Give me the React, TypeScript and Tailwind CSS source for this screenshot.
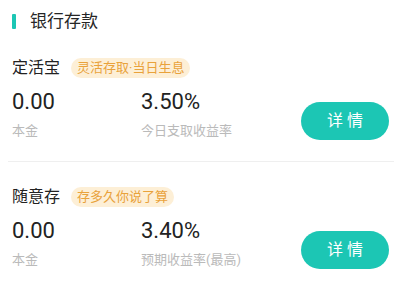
import React from 'react';

const FONT = { fontFamily: 'Roboto, "Noto Sans CJK SC", sans-serif' };

interface Product {
  name: string;
  tag: string;
  amount: string;
  rate: string;
  rateLabel: string;
}

const PRODUCTS: Product[] = [
  { name: '定活宝', tag: '灵活存取·当日生息', amount: '0.00', rate: '3.50%', rateLabel: '今日支取收益率' },
  { name: '随意存', tag: '存多久你说了算', amount: '0.00', rate: '3.40%', rateLabel: '预期收益率(最高)' },
];

function ProductRow({ p }: { p: Product }) {
  return (
    <div className="flex flex-col">
      <div className="flex items-center h-[22px] gap-[11px]">
        <span className="text-[16px] leading-[22px] text-[#222]">{p.name}</span>
        <span className="h-[20px] px-[6px] rounded-full bg-[#fdefd6] text-[#e9a23b] text-[13px] leading-[20px]">
          {p.tag}
        </span>
      </div>
      <div className="flex items-end mt-[10px]">
        <div className="w-[129px] flex flex-col">
          <span className="text-[22px] leading-[26px] text-[#222]">{p.amount}</span>
          <span className="mt-[7px] text-[13px] leading-[18px] text-[#bababa]">本金</span>
        </div>
        <div className="flex-1 flex flex-col">
          <span className="text-[22px] leading-[26px] text-[#222]">{p.rate}</span>
          <span className="mt-[7px] text-[13px] leading-[18px] text-[#bababa]">{p.rateLabel}</span>
        </div>
        <button className="w-[88px] h-[38px] rounded-full bg-[#1cc6b4] text-white text-[16px] leading-[38px] mr-px">
          详 情
        </button>
      </div>
    </div>
  );
}

export default function App() {
  return (
    <div className="w-[402px] h-[286px] bg-white pl-3 pr-3 pt-[11px] overflow-hidden" style={FONT}>
      <div className="flex items-center h-[20px] gap-[14px]">
        <div className="w-[4px] h-[15px] bg-[#1cc6b4] rounded-[1px]" />
        <span className="text-[17px] leading-[20px] text-[#262626]">银行存款</span>
      </div>
      <div className="mt-[26px]">
        <ProductRow p={PRODUCTS[0]} />
      </div>
      <div className="h-px bg-[#efefef] -mx-1 mt-[21px]" />
      <div className="mt-[24px]">
        <ProductRow p={PRODUCTS[1]} />
      </div>
    </div>
  );
}
